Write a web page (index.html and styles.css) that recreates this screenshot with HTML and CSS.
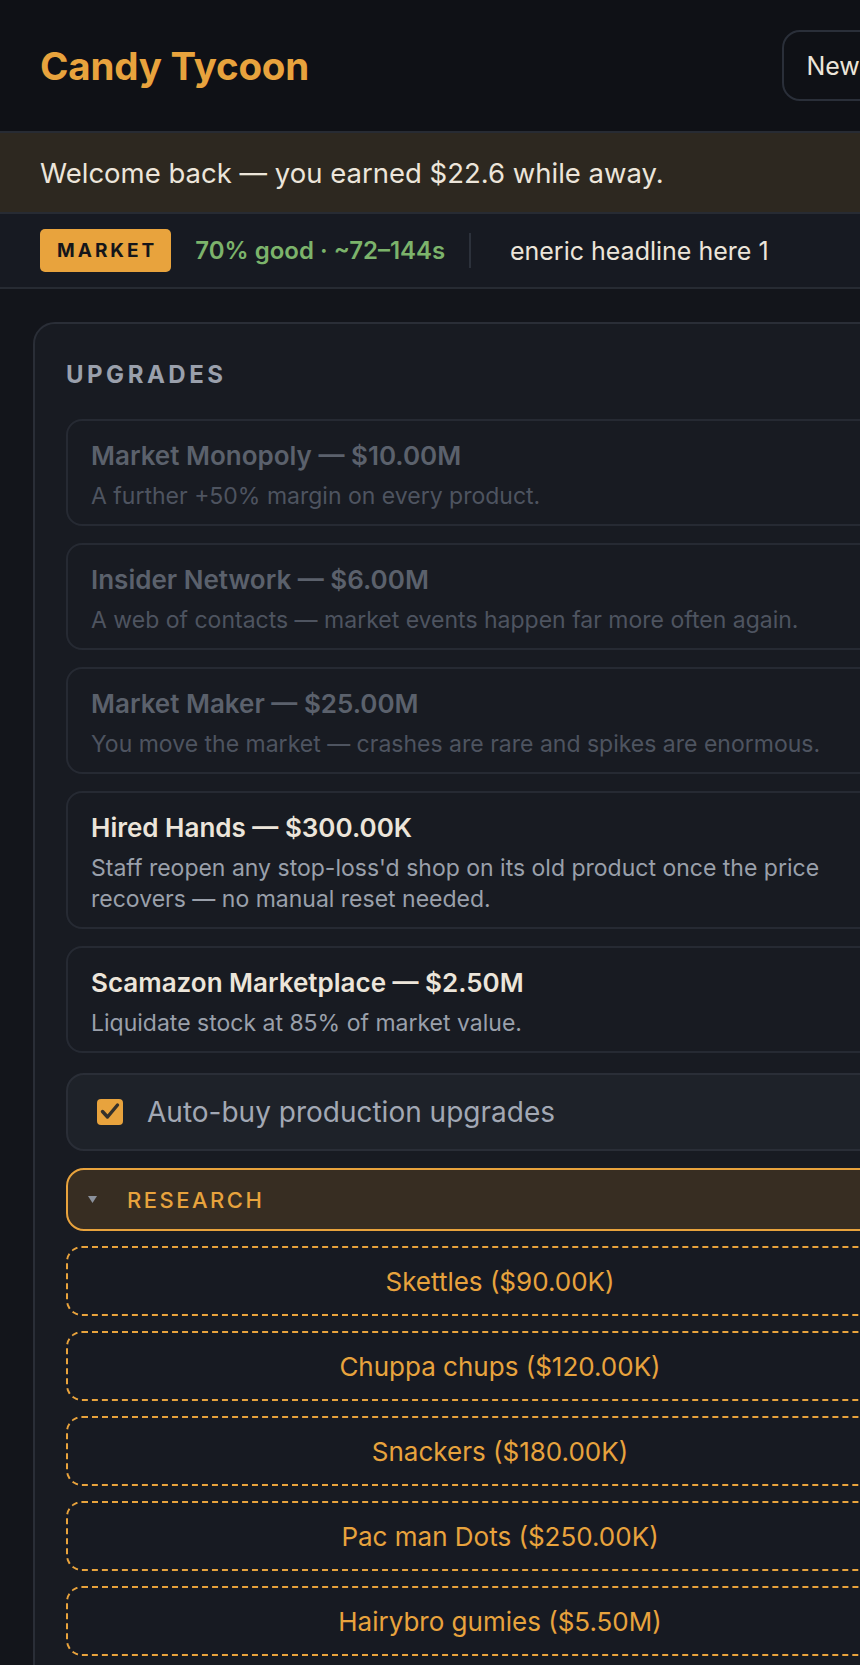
FILE: index.html
```html
<!DOCTYPE html>
<html lang="en">
<head>
    <meta charset="UTF-8">
    <meta name="viewport" content="width=device-width, initial-scale=1.0">
    <title>Candy Tycoon</title>
    <link rel="stylesheet" href="styles.css">
</head>
<body>

<div class="page">

    <!-- Top bar -->
    <header class="topbar">
        <h1 class="logo">Candy Tycoon</h1>
        <div class="top-actions">
            <button class="btn-ghost">New Game</button>
        </div>
    </header>

    <!-- Offline earnings -->
    <div class="away-banner">Welcome back — you earned $22.6 while away.</div>

    <!-- Market ticker -->
    <div class="ticker">
        <span class="ticker-tag">MARKET</span>
        <span class="ticker-odds">70% good · ~72–144s</span>
        <span class="ticker-divider"></span>
        <div class="ticker-window">
            <span class="ticker-text">Generic headline here 1</span>
        </div>
    </div>

    <main class="main">
        <section class="panel">
            <h2 class="panel-title">UPGRADES</h2>

            <div class="upgrade-list">
                <div class="upgrade locked">
                    <div class="upgrade-name">Market Monopoly — $10.00M</div>
                    <div class="upgrade-desc">A further +50% margin on every product.</div>
                </div>
                <div class="upgrade locked">
                    <div class="upgrade-name">Insider Network — $6.00M</div>
                    <div class="upgrade-desc">A web of contacts — market events happen far more often again.</div>
                </div>
                <div class="upgrade locked">
                    <div class="upgrade-name">Market Maker — $25.00M</div>
                    <div class="upgrade-desc">You move the market — crashes are rare and spikes are enormous.</div>
                </div>
                <div class="upgrade">
                    <div class="upgrade-name">Hired Hands — $300.00K</div>
                    <div class="upgrade-desc">Staff reopen any stop-loss'd shop on its old product once the price recovers — no manual reset needed.</div>
                </div>
                <div class="upgrade">
                    <div class="upgrade-name">Scamazon Marketplace — $2.50M</div>
                    <div class="upgrade-desc">Liquidate stock at 85% of market value.</div>
                </div>
            </div>

            <label class="autobuy">
                <span class="check">
                    <svg width="26" height="26" viewBox="0 0 26 26">
                        <path d="M5.5 12.5 L10.5 18 L20.5 6" fill="none" stroke="#35312b" stroke-width="3.4" stroke-linecap="round" stroke-linejoin="round"/>
                    </svg>
                </span>
                <span class="autobuy-label">Auto-buy production upgrades</span>
            </label>

            <div class="research-head">
                <svg class="caret" width="9" height="7" viewBox="0 0 9 7">
                    <polygon points="0,0 9,0 4.5,7" fill="#8b919c"/>
                </svg>
                <span>RESEARCH</span>
            </div>

            <div class="research-list">
                <button class="research-btn">Skettles ($90.00K)</button>
                <button class="research-btn">Chuppa chups ($120.00K)</button>
                <button class="research-btn">Snackers ($180.00K)</button>
                <button class="research-btn">Pac man Dots ($250.00K)</button>
                <button class="research-btn">Hairybro gumies ($5.50M)</button>
            </div>
        </section>
    </main>

</div>

</body>
</html>
```

FILE: styles.css
```css
/* Basic Reset */
* {
    margin: 0;
    padding: 0;
    box-sizing: border-box;
}

html, body {
    overflow-x: hidden;
}

body {
    font-family: Inter, "Noto Sans", Arial, sans-serif;
    background-color: #13151b;
    color: #ece5da;
}

.page {
    width: 1000px;
}

/* Top bar */
.topbar {
    height: 133px;
    display: flex;
    justify-content: space-between;
    align-items: center;
    padding: 0 40px;
    background-color: #0f1116;
    border-bottom: 2px solid #272b33;
}

.logo {
    font-size: 38.5px;
    font-weight: 700;
    color: #e8a33d;
    letter-spacing: -0.2px;
}

.btn-ghost {
    height: 71px;
    padding: 0 22px;
    background: transparent;
    border: 2px solid #2a2f39;
    border-radius: 18px;
    color: #ece5da;
    font-family: inherit;
    font-size: 25px;
}

/* Offline banner */
.away-banner {
    height: 81px;
    display: flex;
    align-items: center;
    padding: 0 40px;
    background-color: #2d2820;
    border-bottom: 2px solid #272b33;
    font-size: 27.5px;
}

/* Ticker */
.ticker {
    height: 75px;
    display: flex;
    align-items: center;
    gap: 24px;
    padding: 0 40px;
    background-color: #171a22;
    border-bottom: 2px solid #272b33;
}

.ticker-tag {
    height: 43px;
    display: flex;
    align-items: center;
    padding: 0 14px 0 17px;
    background-color: #e8a33d;
    border-radius: 5px;
    color: #15161a;
    font-size: 19px;
    font-weight: 700;
    letter-spacing: 3px;
}

.ticker-odds {
    color: #7cb36b;
    font-size: 24px;
    font-weight: 600;
}

.ticker-divider {
    width: 2px;
    height: 35px;
    background-color: #2c313b;
}

.ticker-window {
    flex: 1;
    margin-left: 14px;
    overflow: hidden;
    white-space: nowrap;
}

.ticker-text {
    display: inline-block;
    transform: translateX(-18px);
    font-size: 25px;
}

/* Main panel */
.main {
    padding: 33px;
}

.panel {
    display: flex;
    flex-direction: column;
    padding: 37px 31px 31px;
    background-color: #181b22;
    border: 2px solid #2a2e37;
    border-radius: 22px;
}

.panel-title {
    font-size: 24px;
    line-height: 28px;
    font-weight: 700;
    letter-spacing: 3.5px;
    color: #9aa0ac;
    margin-bottom: 30px;
}

.upgrade-list {
    display: flex;
    flex-direction: column;
    gap: 17px;
}

.upgrade {
    padding: 19px 23px 12px;
    border: 2px solid #262a33;
    border-radius: 16px;
}

.upgrade-name {
    font-size: 26px;
    line-height: 32px;
    font-weight: 600;
    color: #ece5da;
    margin-bottom: 9px;
}

.upgrade-desc {
    font-size: 23px;
    line-height: 31px;
    color: #9aa0ab;
}

.upgrade.locked .upgrade-name {
    color: #5b616c;
}

.upgrade.locked .upgrade-desc {
    color: #4e5460;
}

/* Auto-buy toggle */
.autobuy {
    height: 78px;
    margin-top: 20px;
    display: flex;
    align-items: center;
    gap: 24px;
    padding: 0 29px;
    background-color: #1e2229;
    border: 2px solid #2a2e37;
    border-radius: 18px;
}

.check {
    width: 26px;
    height: 26px;
    display: block;
    background-color: #e8a33d;
    border-radius: 4px;
}

.check svg {
    display: block;
}

.autobuy-label {
    font-size: 28px;
    color: #a2a8b4;
}

/* Research */
.research-head {
    height: 63px;
    margin-top: 17px;
    display: flex;
    align-items: center;
    gap: 30px;
    padding: 0 20px;
    background-color: #372d22;
    border: 2px solid #e8a33d;
    border-radius: 18px;
    color: #e8a33d;
    font-size: 22px;
    font-weight: 500;
    letter-spacing: 2.5px;
}

.caret {
    display: block;
}

.research-list {
    margin-top: 15px;
    display: flex;
    flex-direction: column;
    gap: 15px;
}

.research-btn {
    height: 70px;
    background-color: #171a22;
    border: 2px dashed #e8a33d;
    border-radius: 16px;
    color: #e8a33d;
    font-family: inherit;
    font-size: 26px;
}
```
